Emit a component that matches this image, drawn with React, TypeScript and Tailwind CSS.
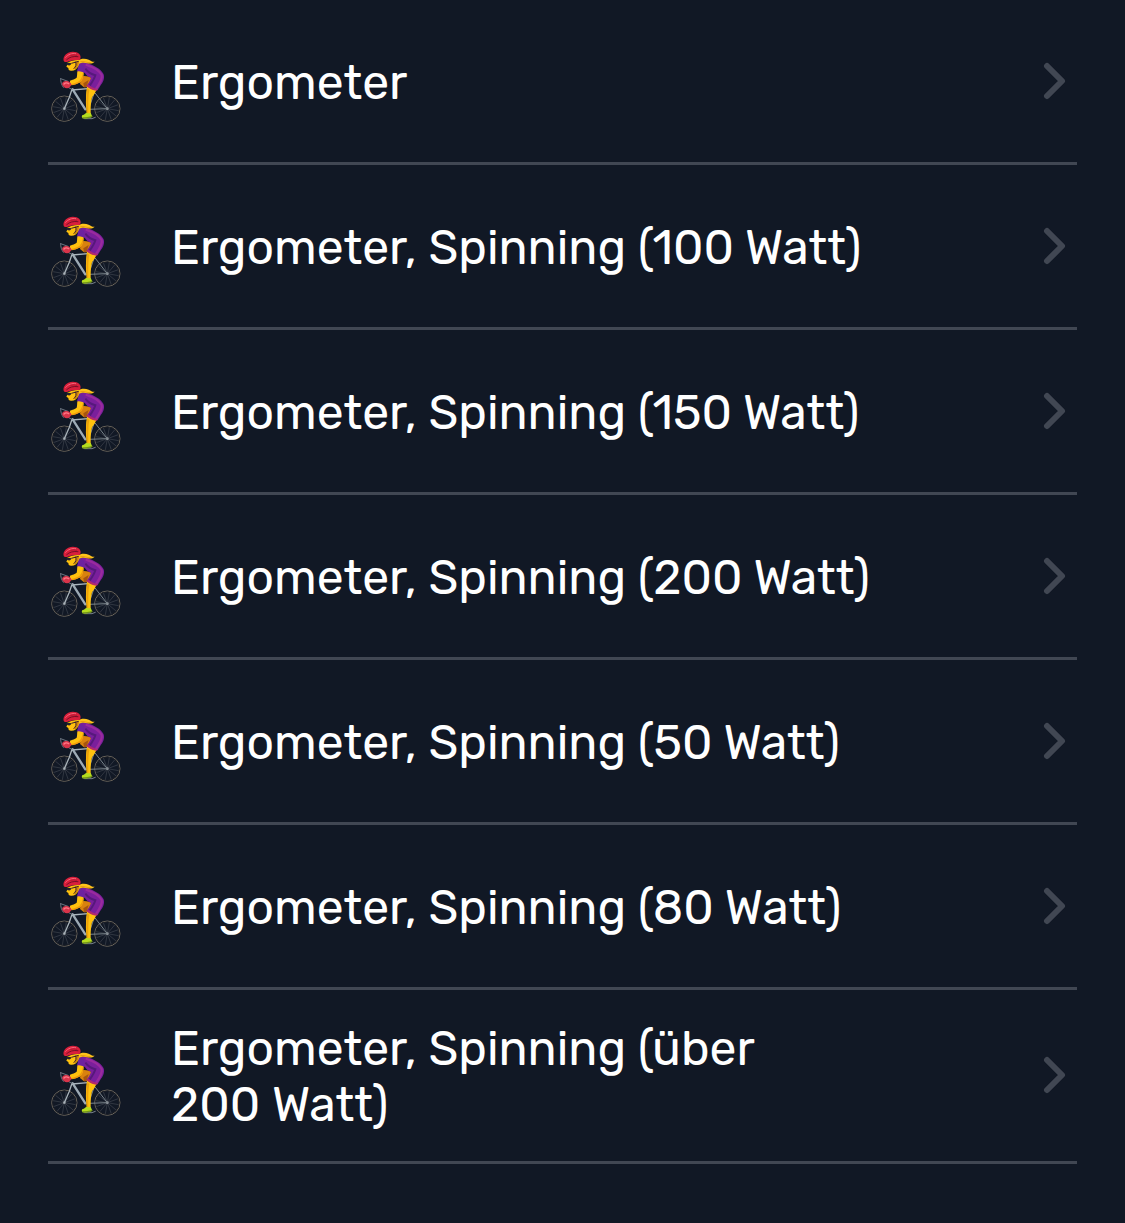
const activities = [
  'Ergometer',
  'Ergometer, Spinning (100 Watt)',
  'Ergometer, Spinning (150 Watt)',
  'Ergometer, Spinning (200 Watt)',
  'Ergometer, Spinning (50 Watt)',
  'Ergometer, Spinning (80 Watt)',
  'Ergometer, Spinning (über 200\u00a0Watt)',
];

function Wheel({ cx, cy }: { cx: number; cy: number }) {
  const spokes = [0, 30, 60, 90, 120, 150];
  return (
    <g fill="none">
      <circle cx={cx} cy={cy} r="38" stroke="#6b655b" strokeWidth="3" />
      <circle cx={cx} cy={cy} r="35" stroke="#1b1e26" strokeWidth="3" />
      {spokes.map((angle) => (
        <path
          key={angle}
          d={`M${cx - 34} ${cy}h68`}
          transform={`rotate(${angle + 10} ${cx} ${cy})`}
          stroke="#484d56"
          strokeWidth="1.6"
        />
      ))}
      <circle cx={cx} cy={cy} r="4" fill="#90969c" />
    </g>
  );
}

function Cyclist() {
  return (
    <svg viewBox="6 6 228 228" className="size-[76px]" aria-hidden="true">
      <Wheel cx={55} cy={188} />
      <Wheel cx={184} cy={188} />
      {/* far leg */}
      <path d="M106 92c8-4 24 0 32 4l-12 28-12 0-12-10z" fill="#d9820f" />
      <path d="M112 112l16-10-6 20-8 2z" fill="#a8550f" />
      {/* frame */}
      <g fill="none" strokeLinecap="round" strokeLinejoin="round">
        <path d="M78 130 70 154 55 188" stroke="#aab4ba" strokeWidth="4" />
        <path d="M80 130 118 190" stroke="#9eabb5" strokeWidth="7" />
        <path d="M78 132 126 128" stroke="#a9b5bd" strokeWidth="4" />
        <path d="M146 136 128 190l56-2-36-46" stroke="#7b858c" strokeWidth="3" />
        <path d="M140 130h14" stroke="#3b3c43" strokeWidth="5" />
        <path d="M44 98c0 10 2 18 8 26M44 98l22 8M66 124l12 6" stroke="#6b7480" strokeWidth="3" />
        <path d="M116 218h22l10-4" stroke="#77808a" strokeWidth="3" />
      </g>
      {/* near leg */}
      <path d="M124 120c8-6 24-2 28 8-2 9-8 18-14 26-4 14-4 32-4 50h-12c-1-18-3-34-2-46 0-14 1-28 4-38z" fill="#ffc20e" />
      <path d="M124 126c-4 20-3 44-1 74l4 2c0-28-1-52 3-70z" fill="#eda10a" />
      <path d="M110 207c5-1 8-5 12-7 4 2 9 2 12 0l5 12c-10 4-21 7-29 5-4-2-3-9 0-10z" fill="#b5dc1e" />
      <path d="M109 214c10 0 20-2 30-5v4c-10 4-22 6-30 4z" fill="#73931b" />
      {/* body */}
      <path d="M98 54c6-5 18-6 26-3 20 7 40 18 48 32 5 10 1 22-6 32-5 8-8 13-12 18-12-1-24-6-32-14 6-8 10-15 13-24-8-2-14-8-19-15l-21-4z" fill="#7a1f9c" />
      <path d="M122 57c22 7 38 17 45 30 3 11-6 26-16 40" fill="none" stroke="#9a2b9e" strokeWidth="7" strokeLinecap="round" />
      <path d="M118 68c8 11 18 17 30 20-3 10-9 20-17 31" fill="none" stroke="#56197c" strokeWidth="6" />
      <path d="M121 120c8 8 20 13 31 14l4-5c-12-2-21-6-29-13z" fill="#b32a6c" />
      {/* arm */}
      <path d="M94 76c6-2 14-1 19 2 1 10-3 24-10 31-9 5-18 7-26 9-4-3-6-9-5-14 8-3 14-5 20-9 2-6 1-12 2-19z" fill="#ffc20e" />
      <path d="M112 82c0 12-3 21-9 27-9 5-17 7-26 9l-1-4c10-2 17-5 24-9 6-6 9-13 10-23z" fill="#f09a0b" />
      <path d="M98 54c8-2 14 2 18 12l-1 15c-7-4-14-5-22-5 2-7 4-14 5-22z" fill="#6d22a0" />
      {/* glove */}
      <path d="M48 114c1-7 9-11 18-8 4 2 9 5 10 9-1 7-6 12-13 12-7-1-13-5-15-13z" fill="#d8344a" />
      <path d="M54 114c4-4 9-4 14-1" fill="none" stroke="#ff7987" strokeWidth="4" strokeLinecap="round" />
      {/* head and hair */}
      <path d="M96 44c8-7 22-7 32-3 8 4 11 7 18 6-4 5-14 7-22 5-9-3-17-3-26 2z" fill="#ffc31b" />
      <path d="M103 47c11-3 19 4 31 3" fill="none" stroke="#e08b0c" strokeWidth="2" />
      <path d="M64 50c8-5 22-9 36-8 2 10-3 22-12 29-6 4-16 4-20 0l-1-5-6-4 3-6z" fill="#ffc20e" />
      <path d="M88 48c4 8 2 16-5 22l6-1c7-6 10-14 10-24z" fill="#cd820c" />
      <path d="M60 52c5-3 11-2 16 0-1 6-6 8-12 5z" fill="#22202a" />
      <path d="M76 52 98 46M88 47c4 8 2 15-5 21" fill="none" stroke="#39212b" strokeWidth="3" />
      {/* helmet */}
      <path d="M53 44c-2-10 3-19 14-24 12-5 26-3 33 4 5 5 5 13 1 18-12-1-26 0-36 5-5 2-11 1-12-3z" fill="#d91f3b" />
      <path d="M59 34c7-9 19-13 30-11" fill="none" stroke="#fa667a" strokeWidth="3" strokeLinecap="round" />
      <path d="M62 41c9-8 20-11 34-9" fill="none" stroke="#780e27" strokeWidth="3" strokeLinecap="round" />
      <path d="M74 28q10-3 18 0" fill="none" stroke="#a01531" strokeWidth="2" strokeLinecap="round" />
    </svg>
  );
}

function Chevron() {
  return (
    <svg viewBox="0 0 24 38" className="h-[38px] w-6 shrink-0" fill="none" aria-hidden="true">
      <path d="M4 4 19 19 4 34" stroke="#414753" strokeWidth="6" strokeLinecap="round" strokeLinejoin="round" />
    </svg>
  );
}

export default function App() {
  return (
    <main className="min-h-screen bg-[#111825] px-12 font-['Rubik','Inter',sans-serif] text-white">
      <ul>
        {activities.map((name) => (
          <li key={name} className="border-b-3 border-[#414753]">
            <button
              type="button"
              className="flex min-h-[162px] w-full items-center gap-[47px] pt-[29px] pb-[30px] pr-2.5 text-left"
            >
              <span className="-my-4 shrink-0 pt-2.5">
                <Cyclist />
              </span>
              <span className="flex-1 pt-0.5 -mb-0.5">
                <span className="block max-w-[720px] text-5xl leading-[56px]">{name}</span>
              </span>
              <Chevron />
            </button>
          </li>
        ))}
      </ul>
    </main>
  );
}
